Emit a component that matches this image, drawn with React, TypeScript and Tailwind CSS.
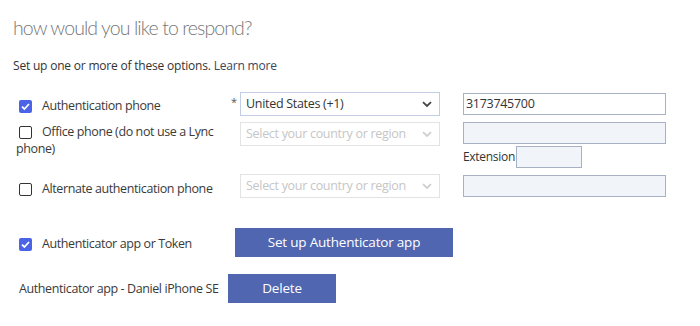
import React from "react";

function Check({ checked }: { checked?: boolean }) {
  return checked ? (
    <span className="inline-block w-[13px] h-[13px] rounded-[2px] bg-[#4a63e7] align-[-3px] ml-[3px] mr-[10px] relative">
      <svg viewBox="0 0 13 13" className="absolute inset-0 w-[13px] h-[13px]">
        <path d="M3 6.6 L5.4 9 L10 4" fill="none" stroke="#fff" strokeWidth="1.8" />
      </svg>
    </span>
  ) : (
    <span className="inline-block w-[13px] h-[13px] rounded-[2px] border border-[#333] bg-white align-[-3px] ml-[3px] mr-[10px]" />
  );
}

function Chevron({ color }: { color: string }) {
  return (
    <svg viewBox="0 0 10 7" className="w-[10px] h-[7px] shrink-0">
      <path d="M1 1.2 L5 5 L9 1.2" fill="none" stroke={color} strokeWidth="1.8" />
    </svg>
  );
}

function Select({ value, disabled }: { value: string; disabled?: boolean }) {
  return (
    <div
      className={
        "w-[200px] h-[24px] border flex items-center justify-between pl-[5px] pr-[7px] text-[12.5px] tracking-[-0.3px] bg-white whitespace-nowrap " +
        (disabled ? "border-[#e3e3e3] text-[#c6c6c6]" : "border-[#c3cde3] text-[#333]")
      }
    >
      <span>{value}</span>
      <Chevron color={disabled ? "#cfcfcf" : "#444"} />
    </div>
  );
}

function Input({ value, disabled, w = "w-[203px]" }: { value?: string; disabled?: boolean; w?: string }) {
  return (
    <div
      className={
        w +
        " h-[22px] border border-[#a7b1c3] flex items-center px-[2px] text-[12.5px] tracking-[-0.3px] text-[#333] " +
        (disabled ? "bg-[#f1f4f9]" : "bg-white")
      }
    >
      {value}
    </div>
  );
}

export default function App() {
  return (
    <div className="w-[700px] h-[326px] bg-white pl-[13px] pt-[14px] font-['Open_Sans','Noto_Sans',sans-serif] text-[#333]">
      <h2 className="font-['Lato','Open_Sans',sans-serif] text-[19.5px] tracking-[-0.9px] font-light leading-[28px] text-[#777]">
        how would you like to respond?
      </h2>
      <p className="mt-[16px] text-[12px] tracking-[-0.2px] leading-[16px] text-[#333]">
        Set up one or more of these options. <span className="text-[#394660]">Learn more</span>
      </p>

      <div className="pl-[3px] mt-[18px] text-[12.5px] tracking-[-0.4px] text-[#3a3a3a]">
        {/* row 1 */}
        <div className="flex items-start">
          <div className="w-[212px] pt-[5px] leading-[18px]">
            <Check checked />
            Authentication phone
          </div>
          <div className="w-[12px] pl-[3px] pt-[2px] text-[11px] text-[#555]">*</div>
          <Select value="United States (+1)" />
          <div className="ml-[23px] mt-[1px]">
            <Input value="3173745700" />
          </div>
        </div>

        {/* row 2 */}
        <div className="flex items-start mt-[6px]">
          <div className="w-[212px] pt-[1px] leading-[17px]">
            <Check />
            Office phone (do not use a Lync
            <br />
            phone)
          </div>
          <div className="w-[12px]" />
          <Select value="Select your country or region" disabled />
          <div className="ml-[23px] flex flex-col">
            <Input disabled />
            <div className="flex items-center mt-[2px] leading-[16px]">
              <span className="text-[12px] tracking-[-0.3px] text-[#333]">Extension</span>
              <div className="ml-[1px]">
                <Input disabled w="w-[66px]" />
              </div>
            </div>
          </div>
        </div>

        {/* row 3 */}
        <div className="flex items-start mt-[6px]">
          <div className="w-[212px] pt-[6px] leading-[18px]">
            <Check />
            Alternate authentication phone
          </div>
          <div className="w-[12px]" />
          <Select value="Select your country or region" disabled />
          <div className="ml-[23px] mt-[1px]">
            <Input disabled />
          </div>
        </div>

        {/* row 4 */}
        <div className="flex items-center mt-[30px]">
          <div className="w-[219px] leading-[18px] pt-[3px]">
            <Check checked />
            Authenticator app or Token
          </div>
          <button className="w-[218px] h-[29px] bg-[#5066b0] text-white text-[13.5px] tracking-[-0.2px]">
            Set up Authenticator app
          </button>
        </div>

        {/* row 5 */}
        <div className="flex items-center mt-[17px]">
          <div className="w-[212px] pl-[3px] leading-[18px] whitespace-nowrap">Authenticator app - Daniel iPhone SE</div>
          <button className="w-[108px] h-[29px] bg-[#5066b0] text-white text-[13.5px] tracking-[-0.2px]">Delete</button>
        </div>
      </div>
    </div>
  );
}
